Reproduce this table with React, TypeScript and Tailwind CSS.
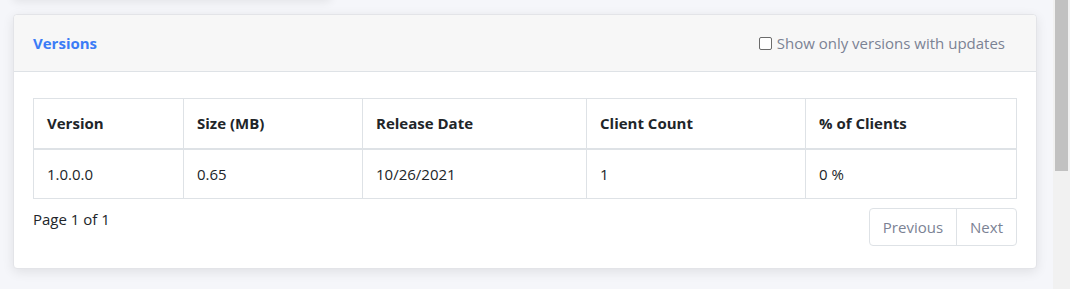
import { useState } from "react";

interface VersionRow {
  version: string;
  size: string;
  releaseDate: string;
  clientCount: number;
  percent: string;
}

const rows: VersionRow[] = [
  { version: "1.0.0.0", size: "0.65", releaseDate: "10/26/2021", clientCount: 1, percent: "0 %" },
];

const columns = [
  { label: "Version", width: "w-[150px]" },
  { label: "Size (MB)", width: "w-[179px]" },
  { label: "Release Date", width: "w-[224px]" },
  { label: "Client Count", width: "w-[219px]" },
  { label: "% of Clients", width: "" },
];

export default function App() {
  const [onlyUpdates, setOnlyUpdates] = useState(false);

  return (
    <div className="flex h-[289px] overflow-hidden bg-[#f5f6fa] font-['Open_Sans','Noto_Sans',sans-serif] text-[#212529]">
      <div className="flex-1 pl-[13px] pr-[16px]">
        {/* tail of the card above, only its shadow shows */}
        <div className="-mt-[20px] h-[20px] w-[318px] rounded bg-white shadow-[0_2px_10px_rgba(0,0,0,0.08)]" />

        <div className="mt-[14px] rounded border border-[#e3e4e8] bg-white shadow-[0_3px_12px_rgba(0,0,0,0.09)]">
          {/* header */}
          <div className="flex h-[57px] items-center justify-between rounded-t border-b border-[#dee2e6] bg-[#f7f7f7] pl-[19px] pr-[31px]">
            <h2 className="text-[15px] font-bold text-[#3b7cf6]">Versions</h2>
            <label className="flex items-center gap-[5px] text-[15px] text-[#7b8294]">
              <input
                type="checkbox"
                checked={onlyUpdates}
                onChange={(e) => setOnlyUpdates(e.target.checked)}
                className="h-[13px] w-[13px] appearance-none rounded-[2px] border border-[#6b6b6b] bg-white"
              />
              Show only versions with updates
            </label>
          </div>

          {/* body */}
          <div className="px-[19px] pt-[26px] pb-[22px]">
            <table className="w-full border-collapse text-[15px]">
              <thead>
                <tr>
                  {columns.map((c) => (
                    <th
                      key={c.label}
                      className={`${c.width} h-[50px] border border-b-2 border-[#dee2e6] px-[13px] text-left font-bold text-[#212529]`}
                    >
                      {c.label}
                    </th>
                  ))}
                </tr>
              </thead>
              <tbody>
                {rows.map((r) => (
                  <tr key={r.version}>
                    <td className="h-[50px] border border-[#dee2e6] px-[13px]">{r.version}</td>
                    <td className="border border-[#dee2e6] px-[13px]">{r.size}</td>
                    <td className="border border-[#dee2e6] px-[13px]">{r.releaseDate}</td>
                    <td className="border border-[#dee2e6] px-[13px]">{r.clientCount}</td>
                    <td className="border border-[#dee2e6] px-[13px]">{r.percent}</td>
                  </tr>
                ))}
              </tbody>
            </table>

            <div className="mt-[9px] flex items-start justify-between">
              <span className="text-[15px] leading-[22px]">Page 1 of 1</span>
              <div className="flex h-[38px] overflow-hidden rounded border border-[#dee2e6] text-[15px] text-[#7b8294]">
                <button className="px-[13px]">Previous</button>
                <button className="border-l border-[#dee2e6] px-[13px]">Next</button>
              </div>
            </div>
          </div>
        </div>
      </div>

      {/* scrollbar */}
      <div className="w-[17px] bg-[#f1f1f1] px-[2px]">
        <div className="h-[171px] bg-[#c1c1c1]" />
      </div>
    </div>
  );
}
